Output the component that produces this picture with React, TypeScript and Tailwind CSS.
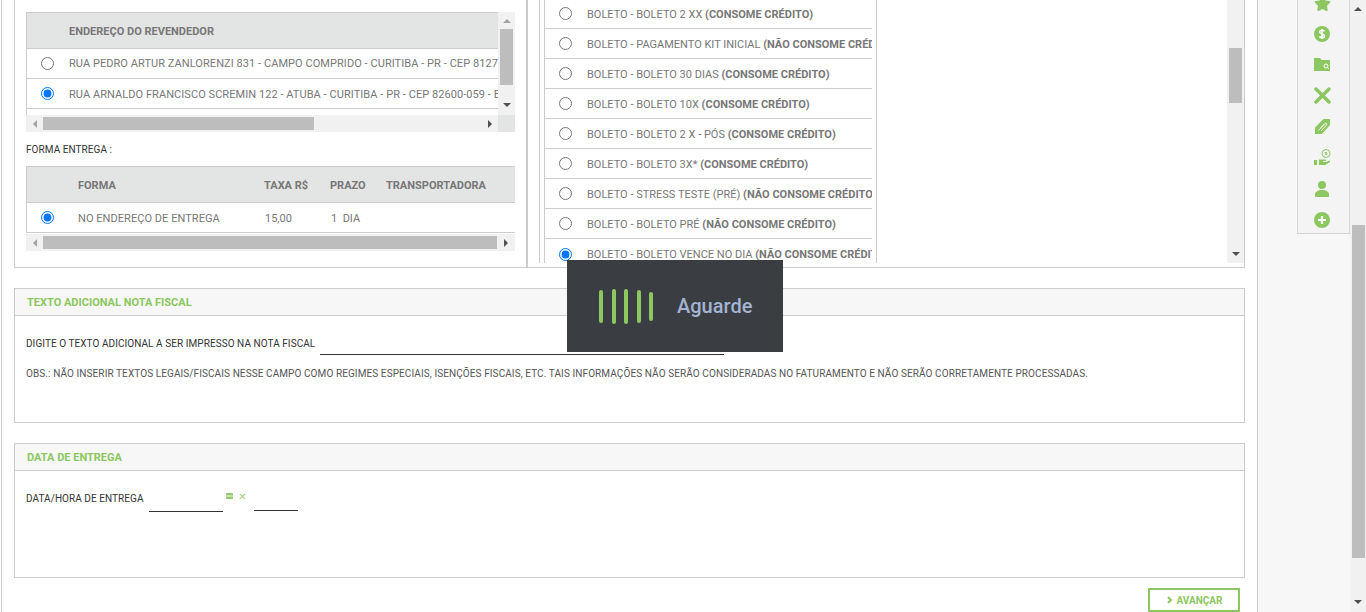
import { FaStar } from 'react-icons/fa'

const boletos = [
  { name: 'BOLETO - BOLETO 2 XX', note: '(CONSOME CRÉDITO)' },
  { name: 'BOLETO - PAGAMENTO KIT INICIAL', note: '(NÃO CONSOME CRÉDITO)' },
  { name: 'BOLETO - BOLETO 30 DIAS', note: '(CONSOME CRÉDITO)' },
  { name: 'BOLETO - BOLETO 10X', note: '(CONSOME CRÉDITO)' },
  { name: 'BOLETO - BOLETO 2 X - PÓS', note: '(CONSOME CRÉDITO)' },
  { name: 'BOLETO - BOLETO 3X*', note: '(CONSOME CRÉDITO)' },
  { name: 'BOLETO - STRESS TESTE (PRÉ)', note: '(NÃO CONSOME CRÉDITO)' },
  { name: 'BOLETO - BOLETO PRÉ', note: '(NÃO CONSOME CRÉDITO)' },
  { name: 'BOLETO - BOLETO VENCE NO DIA', note: '(NÃO CONSOME CRÉDITO)', checked: true },
]

function Radio({ checked = false }: { checked?: boolean }) {
  return <input type="radio" checked={checked} readOnly className="m-0 h-[13px] w-[13px] shrink-0" />
}

function Arrow({ dir, color = '#505050' }: { dir: 'up' | 'down' | 'left' | 'right'; color?: string }) {
  const points = {
    up: '0,4 4,0 8,4',
    down: '0,0 8,0 4,4',
    left: '4,0 4,8 0,4',
    right: '0,0 4,4 0,8',
  }[dir]
  const size = dir === 'up' || dir === 'down' ? 'h-[4px] w-[8px]' : 'h-[8px] w-[4px]'
  const box = dir === 'up' || dir === 'down' ? '0 0 8 4' : '0 0 4 8'
  return (
    <svg viewBox={box} className={`${size} shrink-0`}>
      <polygon points={points} fill={color} />
    </svg>
  )
}

function HScroll({ thumb, rightDark = false }: { thumb: string; rightDark?: boolean }) {
  return (
    <div className="flex h-[17px] items-center bg-[#f1f1f1]">
      <div className="flex w-[17px] justify-center">
        <Arrow dir="left" color="#a3a3a3" />
      </div>
      <div className="h-[13px] bg-[#bdbdbd]" style={{ width: thumb }} />
      <div className="flex-1" />
      <div className={rightDark ? 'flex w-[18px] justify-center' : 'flex w-[17px] justify-center'}>
        <Arrow dir="right" />
      </div>
    </div>
  )
}

function Panel({ title, children }: { title: string; children: React.ReactNode }) {
  return (
    <section className="h-[135px] border border-[#ccc]">
      <h2 className="flex h-[27px] items-center border-b border-[#ccc] bg-[#f7f7f7] pl-3 pt-[2px] text-[11px] font-bold text-[#8cc761]">
        {title}
      </h2>
      {children}
    </section>
  )
}

function ToolIcon({ children }: { children: React.ReactNode }) {
  return <div className="flex h-[31px] items-center justify-center">{children}</div>
}

export default function App() {
  return (
    <div className="relative flex h-[612px] w-[1366px] overflow-hidden bg-white font-['Roboto',sans-serif]">
      <main className="ml-px flex h-[612px] w-[1256px] flex-col border-l border-[#ccc] pl-3 pr-3">
        {/* painel de cima, rolado para fora da tela */}
        <div className="flex h-[268px] w-[1231px] shrink-0 border-x border-b border-[#ccc]">
          <div className="w-[513px] shrink-0 border-r-2 border-[#ccc] px-[11px] pt-[12px]">
            <div className="relative w-[489px] text-[11px] text-[#777]">
              <div className="flex h-[103px] overflow-hidden">
                <div className="w-[472px] border-l border-[#ccc]">
                  <div className="flex h-[37px] items-center border-y border-[#ccc] bg-[#e3e4e4] pl-[42px] pt-[3px] font-bold">
                    ENDEREÇO DO REVENDEDOR
                  </div>
                  <div className="flex h-[30px] items-center overflow-hidden whitespace-nowrap border-b border-[#ccc] pl-[14px] tracking-[0.06px]">
                    <Radio />
                    <span className="ml-[15px] pt-[2px]">RUA PEDRO ARTUR ZANLORENZI 831 - CAMPO COMPRIDO - CURITIBA - PR - CEP 81270-200</span>
                  </div>
                  <div className="flex h-[30px] items-center overflow-hidden whitespace-nowrap border-b border-[#ccc] pl-[14px] tracking-[0.06px]">
                    <Radio checked />
                    <span className="ml-[15px] pt-[4px]">RUA ARNALDO FRANCISCO SCREMIN 122 - ATUBA - CURITIBA - PR - CEP 82600-059 - BRASIL</span>
                  </div>
                </div>
                <div className="flex w-[17px] flex-col items-center bg-[#f1f1f1]">
                  <div className="flex h-[17px] items-center">
                    <Arrow dir="up" color="#a3a3a3" />
                  </div>
                  <div className="h-[56px] w-[13px] bg-[#bdbdbd]" />
                  <div className="flex flex-1 items-end pb-[8px]">
                    <Arrow dir="down" />
                  </div>
                </div>
              </div>
              <div className="flex">
                <div className="w-[472px]">
                  <HScroll thumb="271px" />
                </div>
                <div className="h-[17px] w-[17px] bg-[#e3e4e4]" />
              </div>

              <p className="mt-[12px] h-[12px] text-[10px] leading-[12px] tracking-[0.06px] text-[#333]">FORMA ENTREGA :</p>

              <div className="mt-[10px] border-l border-[#ccc]">
                <div className="flex h-[37px] items-center border-y border-[#ccc] bg-[#e3e4e4] pt-[3px] font-bold">
                  <span className="ml-[51px] w-[186px]">FORMA</span>
                  <span className="w-[66px]">TAXA R$</span>
                  <span className="w-[56px]">PRAZO</span>
                  <span>TRANSPORTADORA</span>
                </div>
                <div className="flex h-[30px] items-center border-b border-[#ccc] pl-[14px]">
                  <Radio checked />
                  <span className="ml-[24px] w-[187px] pt-[3px] tracking-[0.05px]">NO ENDEREÇO DE ENTREGA</span>
                  <span className="w-[66px] pt-[3px]">15,00</span>
                  <span className="pt-[3px]">1&nbsp; DIA</span>
                </div>
              </div>
              <div className="mt-px">
                <HScroll thumb="454px" rightDark />
              </div>
            </div>
          </div>

          <div className="ml-[11px] flex h-[263px] flex-1 border-l border-[#ccc] pl-[4px]">
            <div className="h-[263px] w-[333px] overflow-hidden border-x border-[#ccc] pr-[4px] text-[11px] text-[#777]">
              {boletos.map((b, i) => (
                <div
                  key={b.name}
                  className={`flex h-[30px] items-center overflow-hidden whitespace-nowrap pl-[14px] ${i === 0 ? '-mt-[1px]' : ''} ${i < boletos.length - 1 ? 'border-b border-[#ccc]' : ''}`}
                >
                  <Radio checked={b.checked} />
                  <span className={`ml-[15px] ${i < boletos.length - 1 ? 'pt-[4px]' : 'pt-[2px]'}`}>
                    {b.name} <b>{b.note}</b>
                  </span>
                </div>
              ))}
            </div>
            <div className="flex-1" />
            <div className="flex h-[263px] w-[17px] flex-col items-center bg-[#f1f1f1]">
              <div className="h-[48px]" />
              <div className="h-[55px] w-[13px] bg-[#bdbdbd]" />
              <div className="flex flex-1 items-end pb-[7px]">
                <Arrow dir="down" />
              </div>
            </div>
          </div>
        </div>

        <div className="mt-5 w-[1231px]">
          <Panel title="TEXTO ADICIONAL NOTA FISCAL">
            <div className="px-[11px] pt-[22px] text-[10px] leading-[12px] text-[#333]">
              <div className="flex tracking-[0.06px]">
                <span className="w-[294px]">DIGITE O TEXTO ADICIONAL A SER IMPRESSO NA NOTA FISCAL</span>
                <span className="h-[17px] w-[404px] border-b border-[#333]" />
              </div>
              <p className="mt-[13px] tracking-[0.09px] text-[#555]">
                OBS.: NÃO INSERIR TEXTOS LEGAIS/FISCAIS NESSE CAMPO COMO REGIMES ESPECIAIS, ISENÇÕES FISCAIS, ETC. TAIS INFORMAÇÕES NÃO SERÃO CONSIDERADAS NO FATURAMENTO E NÃO SERÃO CORRETAMENTE PROCESSADAS.
              </p>
            </div>
          </Panel>
        </div>

        <div className="mt-5 w-[1231px]">
          <Panel title="DATA DE ENTREGA">
            <div className="flex items-start px-[11px] pt-[22px] text-[10px] leading-[12px] tracking-[0.06px] text-[#333]">
              <span className="w-[123px]">DATA/HORA DE ENTREGA</span>
              <span className="h-[19px] w-[74px] border-b border-[#333]" />
              <span className="-mt-[3px] ml-[2px] flex h-[12px] w-[29px] items-center gap-[6px] pl-[1px]">
                <span className="h-[6px] w-[7px] rounded-[1px] border-y-[2px] border-[#93ca6b] bg-[#c5e4ae]" />
                <svg viewBox="0 0 8 8" className="h-[7px] w-[7px]">
                  <path d="M1 1l6 6M7 1l-6 6" stroke="#a9d48a" strokeWidth="1.500" />
                </svg>
              </span>
              <span className="h-[18px] w-[44px] border-b border-[#333]" />
            </div>
          </Panel>
        </div>

        <div className="mt-[10px] flex w-[1226px] justify-end">
          <button className="flex h-[24px] w-[92px] items-center justify-center gap-[4px] border-[2px] border-[#8cc761] pl-[1px] text-[10px] font-bold text-[#8cc761]">
            <svg viewBox="0 0 6 8" className="h-[8px] w-[6px]">
              <path d="M1 1l3 3-3 3" fill="none" stroke="#8cc761" strokeWidth="2" />
            </svg>
            AVANÇAR
          </button>
        </div>
      </main>

      <aside className="h-[612px] w-[93px] shrink-0 border-l border-[#ccc] bg-[#f7f7f7] pl-[39px]">
        <div className="flex h-[234px] w-[53px] flex-col border-x border-b border-[#d5d5d5] bg-[#f4f4f4] pr-[3px]">
          <div className="-mt-[13px] flex flex-col">
            <ToolIcon>
              <FaStar className="mt-[2px] h-[17px] w-[17px] text-[#8cc761]" />
            </ToolIcon>
            <ToolIcon>
              <svg viewBox="0 0 16 16" className="h-[16px] w-[16px]">
                <circle cx="8" cy="8" r="8" fill="#8cc761" />
                <path d="M10.6 5.4C10 4.5 9 4.2 8 4.2c-1.3 0-2.4.7-2.4 1.9 0 2.500 4.900 1.300 4.900 3.800 0 1.200-1.100 1.900-2.500 1.900-1 0-2-.4-2.600-1.300M8 3v10" fill="none" stroke="#fff" strokeWidth="1.500" />
              </svg>
            </ToolIcon>
            <ToolIcon>
              <svg viewBox="0 0 16 13" className="h-[13px] w-[16px]">
                <path d="M0 0h6l1.500 2H16v11H0z" fill="#8cc761" />
                <circle cx="12" cy="8" r="2" fill="none" stroke="#fff" strokeWidth="1" />
                <path d="M13.500 9.500l1.500 1.500" stroke="#fff" strokeWidth="1" />
              </svg>
            </ToolIcon>
            <ToolIcon>
              <svg viewBox="0 0 17 17" className="h-[17px] w-[17px]">
                <path d="M2 2l13 13M15 2L2 15" stroke="#8cc761" strokeWidth="3.500" strokeLinecap="round" />
              </svg>
            </ToolIcon>
            <ToolIcon>
              <svg viewBox="0 0 15 15" className="h-[15px] w-[15px]">
                <path d="M0 8.500L8.500 0H15v6l-8 9H0z" fill="#8cc761" />
                <path d="M3.500 11.500L10 4.500c1-1 2.500.5 1.500 1.500L6 12M6 8.500l4-4" fill="none" stroke="#f4f4f4" strokeWidth="1" />
              </svg>
            </ToolIcon>
            <ToolIcon>
              <svg viewBox="0 0 17 17" className="h-[17px] w-[17px]">
                <circle cx="12" cy="4.500" r="4" fill="none" stroke="#8cc761" strokeWidth="1" />
                <path d="M13 3.500h-2v1h2v1h-2" fill="none" stroke="#8cc761" strokeWidth=".8" />
                <rect x="0" y="11" width="3" height="5" fill="#8cc761" />
                <path d="M5 10.500h6c1 0 1.500 1 .5 1.500H9v1h3l4-1.500v1.500L11 16H5z" fill="#8cc761" />
              </svg>
            </ToolIcon>
            <ToolIcon>
              <svg viewBox="0 0 14 16" className="h-[16px] w-[14px]">
                <circle cx="7" cy="4" r="4" fill="#8cc761" />
                <path d="M0 16v-3c0-2 3-3.500 5-4h4c2 .5 5 2 5 4v3z" fill="#8cc761" />
              </svg>
            </ToolIcon>
            <ToolIcon>
              <svg viewBox="0 0 16 16" className="h-[16px] w-[16px]">
                <circle cx="8" cy="8" r="8" fill="#8cc761" />
                <path d="M8 4v8M4 8h8" stroke="#fff" strokeWidth="2.200" />
              </svg>
            </ToolIcon>
          </div>
        </div>
      </aside>

      <div className="flex h-[612px] w-[16px] shrink-0 flex-col items-center bg-[#f1f1f1]">
        <div className="flex h-[18px] items-center">
          <Arrow dir="up" />
        </div>
        <div className="mt-[207px] h-[333px] w-[13px] bg-[#bdbdbd]" />
        <div className="flex flex-1 items-end pb-[8px]">
          <Arrow dir="down" />
        </div>
      </div>

      {/* aviso de carregamento por cima da página */}
      <div className="absolute left-[567px] top-[260px] flex h-[92px] w-[216px] items-center bg-[#3a3d42] pl-[32px]">
        <div className="flex w-[78px] items-center gap-[8.500px]">
          <span className="h-[33px] w-[4px] rounded-full bg-[#8cc761]" />
          <span className="h-[35px] w-[4px] rounded-full bg-[#8cc761]" />
          <span className="h-[35px] w-[4px] rounded-full bg-[#8cc761]" />
          <span className="h-[33px] w-[4px] rounded-full bg-[#8cc761]" />
          <span className="h-[29px] w-[4px] rounded-full bg-[#8cc761]" />
        </div>
        <span className="text-[20px] font-medium text-[#a3b4d3]">Aguarde</span>
      </div>
    </div>
  )
}
